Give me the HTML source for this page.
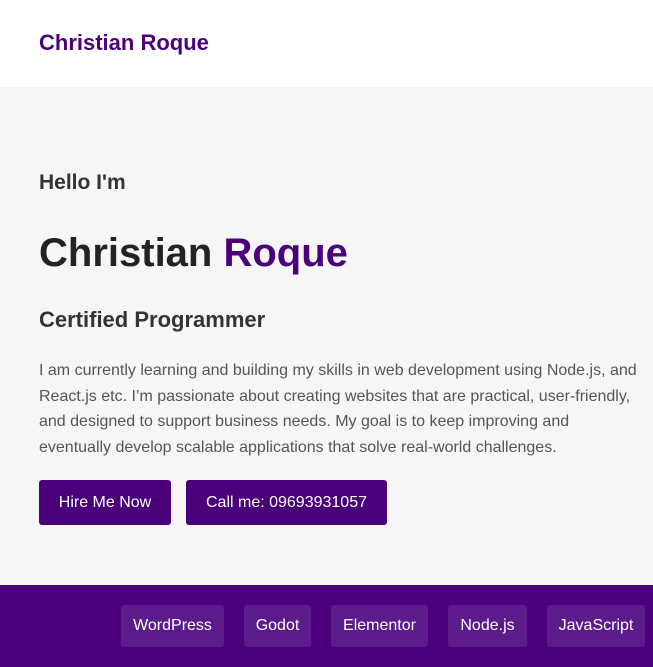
<!DOCTYPE html>
<html><head><style>
*{margin:0;padding:0;box-sizing:border-box}
body{width:653px;height:667px;overflow:hidden;font-family:"Liberation Sans",Arial,sans-serif;background:#f6f6f6}
header{height:87px;background:#fff;position:relative}
header .logo{position:absolute;left:39px;top:30px;font-size:22px;font-weight:bold;color:#4b007b}
main{height:498px;position:relative}
.t{position:absolute;left:39px;color:#333}
h3.t{top:84px;font-size:21px;font-weight:bold}
h1.t{top:144px;font-size:40px;font-weight:bold;color:#222}
h1 span{color:#4b007b}
h2.t{top:220px;font-size:22px;font-weight:bold}
p.t{top:271px;width:605px;font-size:16px;line-height:25.7px;color:#555}
.btn{position:absolute;top:393px;height:45px;background:#4b007b;color:#fff;font-size:16px;line-height:45px;text-align:center;border-radius:3px}
footer{height:82px;background:#4b007b;position:relative}
.tag{position:absolute;top:20px;height:42px;line-height:42px;background:#5c1b8b;color:#fff;font-size:16px;text-align:center;border-radius:3px}
</style></head><body>
<header><div class="logo">Christian Roque</div></header>
<main>
<h3 class="t">Hello I'm</h3>
<h1 class="t">Christian <span>Roque</span></h1>
<h2 class="t">Certified Programmer</h2>
<p class="t">I am currently learning and building my skills in web development using Node.js, and React.js etc. I’m passionate about creating websites that are practical, user-friendly, and designed to support business needs. My goal is to keep improving and eventually develop scalable applications that solve real-world challenges.</p>
<div class="btn" style="left:39px;width:132px">Hire Me Now</div>
<div class="btn" style="left:186px;width:201px">Call me: 09693931057</div>
</main>
<footer>
<div class="tag" style="left:121px;width:103px">WordPress</div>
<div class="tag" style="left:244px;width:67px">Godot</div>
<div class="tag" style="left:331px;width:97px">Elementor</div>
<div class="tag" style="left:448px;width:79px">Node.js</div>
<div class="tag" style="left:547px;width:98px">JavaScript</div>
</footer>
</body></html>
